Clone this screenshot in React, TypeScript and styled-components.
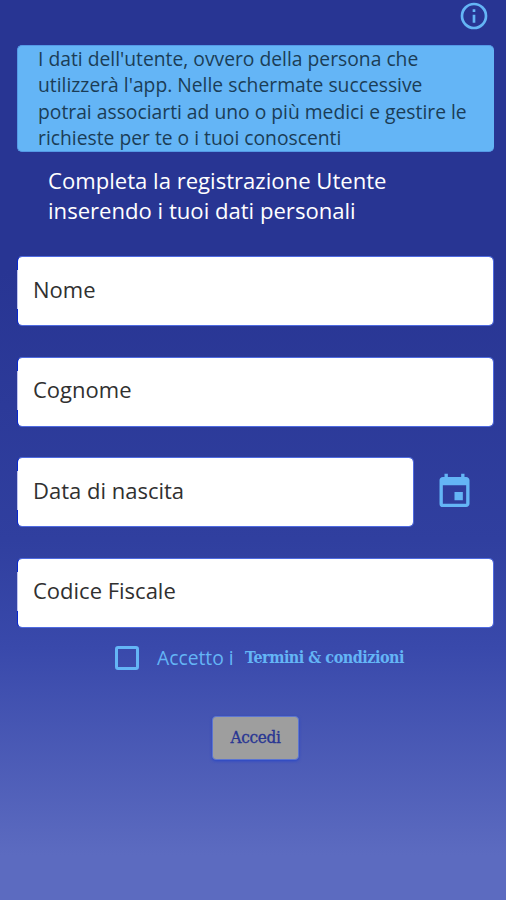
import React from "react";
import styled, { createGlobalStyle } from "styled-components";

const sky = "#64b5f6";

const GlobalStyle = createGlobalStyle`
  *, *::before, *::after { box-sizing: border-box; }
  body { margin: 0; background: #283593; }
`;

const Screen = styled.main`
  display: flex;
  flex-direction: column;
  height: 900px;
  padding: 0 12px 0 17px;
  overflow: hidden;
  font-family: "Open Sans", "Noto Sans", sans-serif;
  background: linear-gradient(#283593 10%, #283593 30%, #303f9f 60%, #3949ab 72%, #5c6bc0 95%);
`;

const TopBar = styled.header`
  display: flex;
  justify-content: flex-end;
  height: 45px;
  padding: 0 4px 0 0;
`;

const IconButton = styled.button`
  display: flex;
  padding: 0;
  border: 0;
  background: none;
  color: ${sky};
`;

const Notice = styled.p`
  height: 107px;
  margin: 0;
  padding: 0 0 0 20px;
  border: 1px solid #5499e6;
  border-width: 1px 0 1px 1px;
  border-radius: 5px;
  background: ${sky};
  color: #1b3d57;
  font-size: 19.3px;
  line-height: 26.35px;
  white-space: nowrap;
`;

const Title = styled.h1`
  height: 104px;
  margin: 0;
  padding: 13px 0 0 31px;
  color: #fff;
  font-size: 22.1px;
  font-weight: 400;
  line-height: 30px;
  white-space: nowrap;
`;

const Form = styled.form`
  display: flex;
  flex-direction: column;
`;

const FieldRow = styled.div`
  display: flex;
  align-items: center;
  height: 70px;
  margin-bottom: 30.6px;

  &:last-of-type { margin-bottom: 15px; }
`;

const Field = styled.label<{ $width: number }>`
  position: relative;
  display: flex;
  align-items: center;
  width: ${(p) => p.$width}px;
  height: 70px;
  padding: 0 0 5px 15px;
  border: 1px solid #4f6be0;
  border-left-color: #0828d0;
  border-radius: 5px;
  background: #fff;
  background-clip: padding-box;
  color: #303030;
  font-size: 22px;

  &::before {
    content: "";
    position: absolute;
    left: -1px;
    top: 13px;
    width: 1px;
    height: 39px;
    background: #c0c5f0;
  }
`;

const CalendarButton = styled(IconButton)`
  margin: -1px 0 0 20px;
`;

const Consent = styled.section`
  display: flex;
  align-items: center;
  height: 30px;
  margin: 0 0 0 98px;
  color: ${sky};
  white-space: nowrap;
`;

const Checkbox = styled.span`
  width: 24px;
  height: 24px;
  border: 3px solid ${sky};
  border-radius: 3px;
`;

const ConsentText = styled.span`
  width: 88px;
  margin-left: 18px;
  font-size: 19.3px;
`;

const TermsLink = styled.a`
  font: 700 16px "DejaVu Serif Condensed", "DejaVu Serif", serif;
  letter-spacing: -0.49px;
`;

const Submit = styled.button`
  width: 87px;
  height: 44px;
  margin: 43px 0 0 195px;
  padding: 0 0 1px;
  border: 1px solid #5c75d0;
  border-radius: 4px;
  background: #9e9e9e;
  box-shadow: 0 1px 3px #2846c8;
  color: #283593;
  font: 17px "DejaVu Serif Condensed", "DejaVu Serif", serif;
  letter-spacing: -0.3px;
  -webkit-text-stroke: 0.35px #283593;
`;

export default function App() {
  return (
    <>
      <GlobalStyle />
      <Screen>
        <TopBar>
          <IconButton aria-label="Informazioni">
            <svg width="32" height="32" viewBox="0 0 24 24" fill="currentColor">
              <path d="M11 17h2v-6h-2v6zm1-15a10 10 0 1 0 0 20 10 10 0 0 0 0-20zm0 18a8 8 0 1 1 0-16 8 8 0 0 1 0 16zM11 9h2V7h-2v2z" />
            </svg>
          </IconButton>
        </TopBar>
        <Notice>
          I dati dell'utente, ovvero della persona che<br />
          utilizzerà l'app. Nelle schermate successive<br />
          potrai associarti ad uno o più medici e gestire le<br />
          richieste per te o i tuoi conoscenti
        </Notice>
        <Title>
          Completa la registrazione Utente<br />
          inserendo i tuoi dati personali
        </Title>
        <Form>
          <FieldRow><Field $width={477}>Nome</Field></FieldRow>
          <FieldRow><Field $width={477}>Cognome</Field></FieldRow>
          <FieldRow>
            <Field $width={397}>Data di nascita</Field>
            <CalendarButton type="button" aria-label="Scegli la data">
              <svg width="41" height="40" viewBox="0 0 24 24" fill="currentColor">
                <path d="M17 12h-5v5h5v-5zM16 1v2H8V1H6v2H5c-1.11 0-1.99.9-1.99 2L3 19a2 2 0 0 0 2 2h14c1.1 0 2-.9 2-2V5c0-1.1-.9-2-2-2h-1V1h-2zm3 18H5V8h14v11z" />
              </svg>
            </CalendarButton>
          </FieldRow>
          <FieldRow><Field $width={477}>Codice Fiscale</Field></FieldRow>
          <Consent>
            <Checkbox role="checkbox" aria-checked={false} />
            <ConsentText>Accetto i</ConsentText>
            <TermsLink>Termini &amp; condizioni</TermsLink>
          </Consent>
          <Submit type="button">Accedi</Submit>
        </Form>
      </Screen>
    </>
  );
}
